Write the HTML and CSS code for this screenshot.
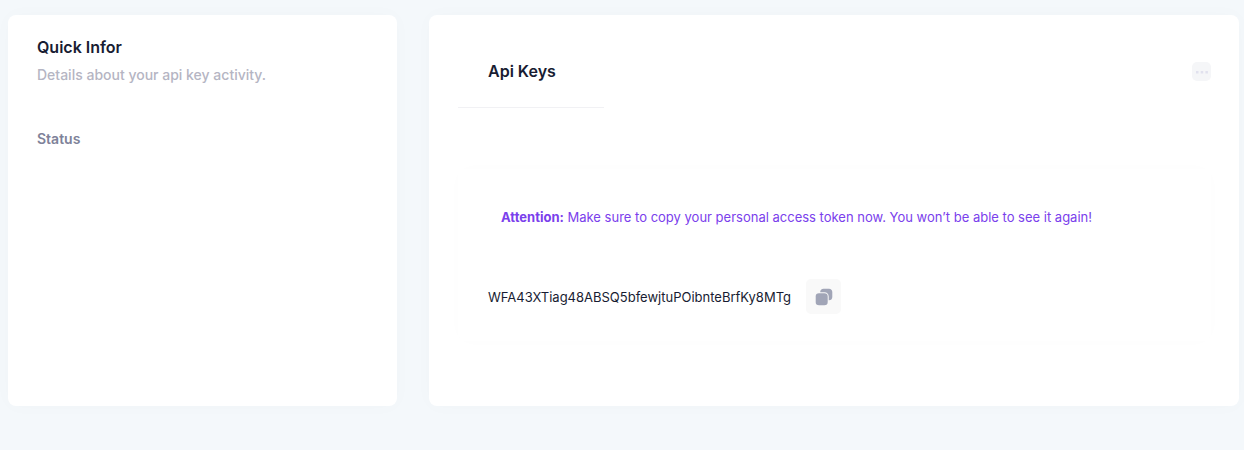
FILE: index.html
```
<!DOCTYPE html>
<html lang="en">
<head>
<meta charset="utf-8">
<title>Api Keys</title>
<link rel="stylesheet" href="styles.css">
</head>
<body>
<main class="layout">
  <section class="card info">
    <h2 class="title">Quick Infor</h2>
    <p class="subtitle">Details about your api key activity.</p>
    <h3 class="label">Status</h3>
  </section>
  <section class="card keys">
    <header class="keys-header">
      <h2 class="title keys-title">Api Keys</h2>
      <button class="menu-button" type="button" aria-label="More options">
        <svg width="14" height="4" viewBox="0 0 14 4" fill="#e1e1ee"><rect x="1" y="1" width="2.5" height="2.5"/><rect x="5.7" y="1" width="2.5" height="2.5"/><rect x="10.4" y="1" width="2.5" height="2.5"/></svg>
      </button>
    </header>
    <div class="token-card">
      <p class="notice"><strong>Attention:</strong> Make sure to copy your personal access token now. You won’t be able to see it again!</p>
      <div class="token-row">
        <span class="token">WFA43XTiag48ABSQ5bfewjtuPOibnteBrfKy8MTg</span>
        <button class="copy-button" type="button" aria-label="Copy token">
          <svg width="18" height="18" viewBox="0 0 18 18" fill="#a1a5b7"><path d="M5.2 4.2V4C5.2 2 6.5.7 8.500.7H14C16 .7 17.300 2 17.300 4V9C17.300 11 16 12.300 14 12.300H13.700V8.500C13.700 6 12 4.200 9.500 4.200Z"/><rect x=".7" y="5.300" width="12" height="12" rx="3.300"/></svg>
        </button>
      </div>
    </div>
  </section>
</main>
</body>
</html>
```
FILE: styles.css
```
* {
  box-sizing: border-box;
}

body {
  margin: 0;
  background: #f4f8fb;
  color: #181c32;
  font: 400 13px/20px Inter, "Liberation Sans", sans-serif;
}

h2,
h3,
p {
  margin: 0;
}

button {
  display: flex;
  align-items: center;
  justify-content: center;
  padding: 0;
  border: 0;
  cursor: pointer;
}

.layout {
  display: grid;
  grid-template-columns: 389fr 810fr;
  gap: 32px;
  padding: 15px 5px 44px 8px;
}

.card {
  border-radius: 8px;
  background: #fff;
  box-shadow: 0 0 20px rgba(76, 87, 125, 0.02);
}

.info {
  padding: 20px 29px;
}

.title {
  font-size: 16px;
  font-weight: 600;
  line-height: 24px;
}

.subtitle {
  margin-top: 6px;
  color: #b5b5c3;
  font-size: 14px;
  font-weight: 500;
}

.label {
  margin-top: 44px;
  color: #7e8299;
  font-size: 14px;
  font-weight: 600;
}

.keys {
  padding: 20px 28px 65px 29px;
}

.keys-header {
  display: flex;
  align-items: center;
  justify-content: space-between;
}

.keys-title {
  width: 146px;
  padding: 24px 0 24px 30px;
  border-bottom: 1px solid #f1f1f4;
}

.menu-button {
  width: 19px;
  height: 19px;
  border-radius: 5px;
  background: #f5f6f8;
}

.token-card {
  margin-top: 61px;
  padding: 38px 30px 27px;
  border-radius: 8px;
  background: #fff;
  box-shadow: 0 0 20px rgba(76, 87, 125, 0.01);
}

.notice {
  padding-left: 13px;
  color: #7a40ec;
}

.token-row {
  display: flex;
  align-items: center;
  gap: 15px;
  margin-top: 52px;
}

.copy-button {
  width: 35px;
  height: 35px;
  border-radius: 5px;
  background: #f9f9f9;
}
```
